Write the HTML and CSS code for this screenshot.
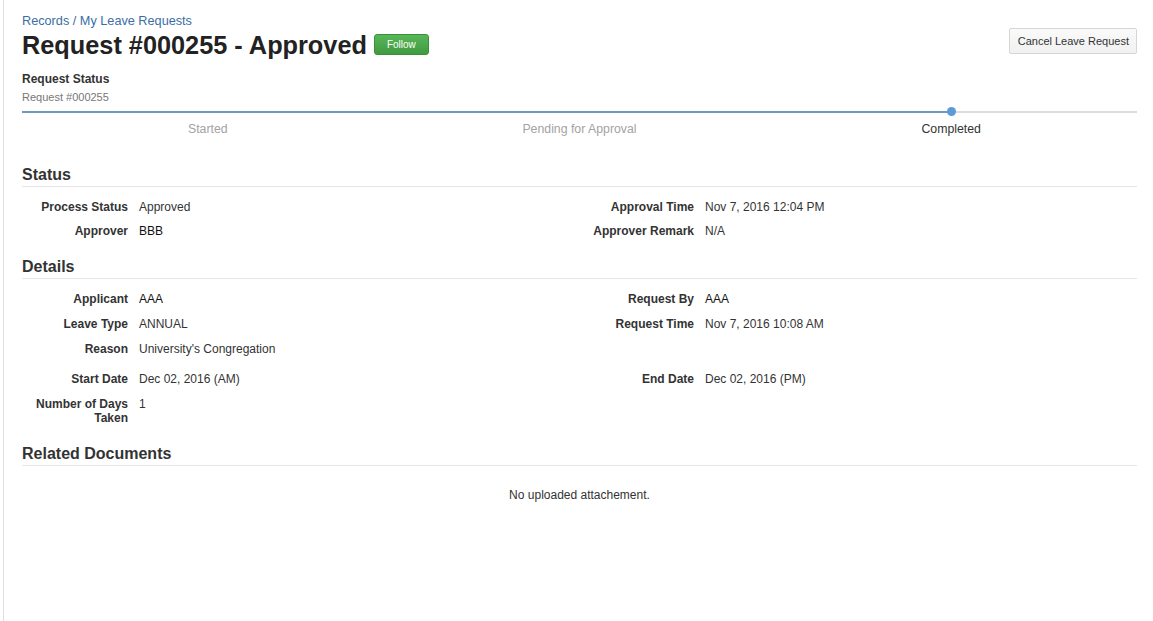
FILE: index.html
```html
<!DOCTYPE html>
<html lang="en">
<head>
    <meta charset="UTF-8">
    <meta name="viewport" content="width=device-width, initial-scale=1.0">
    <title>Request #000255 - Approved</title>
    <link rel="stylesheet" href="styles.css">
</head>
<body>
    <div class="page">
        <div class="page-header">
            <div class="title-block">
                <div class="breadcrumb">
                    <a href="#">Records</a> / <a href="#">My Leave Requests</a>
                </div>
                <div class="title-line">
                    <h1>Request #000255 - Approved</h1>
                    <button class="btn-follow">Follow</button>
                </div>
            </div>
            <button class="btn-cancel">Cancel Leave Request</button>
        </div>

        <div class="request-status">
            <h3>Request Status</h3>
            <div class="request-no">Request #000255</div>
            <div class="stepper">
                <div class="track">
                    <div class="track-fill" style="width: 83.333%"></div>
                    <span class="track-dot" style="left: 83.333%"></span>
                </div>
                <ol class="steps">
                    <li>Started</li>
                    <li>Pending for Approval</li>
                    <li class="current">Completed</li>
                </ol>
            </div>
        </div>

        <div class="section">
            <h2 class="section-title">Status</h2>
            <div class="fields tight">
                <div class="field-row">
                    <span class="label">Process Status</span>
                    <span class="value">Approved</span>
                    <span class="label">Approval Time</span>
                    <span class="value">Nov 7, 2016 12:04 PM</span>
                </div>
                <div class="field-row">
                    <span class="label">Approver</span>
                    <span class="value strong">BBB</span>
                    <span class="label">Approver Remark</span>
                    <span class="value">N/A</span>
                </div>
            </div>
        </div>

        <div class="section">
            <h2 class="section-title">Details</h2>
            <div class="fields">
                <div class="field-row">
                    <span class="label">Applicant</span>
                    <span class="value strong">AAA</span>
                    <span class="label">Request By</span>
                    <span class="value strong">AAA</span>
                </div>
                <div class="field-row">
                    <span class="label">Leave Type</span>
                    <span class="value">ANNUAL</span>
                    <span class="label">Request Time</span>
                    <span class="value">Nov 7, 2016 10:08 AM</span>
                </div>
                <div class="field-row spaced">
                    <span class="label">Reason</span>
                    <span class="value">University's Congregation</span>
                </div>
                <div class="field-row">
                    <span class="label">Start Date</span>
                    <span class="value">Dec 02, 2016 (AM)</span>
                    <span class="label">End Date</span>
                    <span class="value">Dec 02, 2016 (PM)</span>
                </div>
                <div class="field-row">
                    <span class="label">Number of Days Taken</span>
                    <span class="value">1</span>
                </div>
            </div>
        </div>

        <div class="section">
            <h2 class="section-title">Related Documents</h2>
            <p class="empty">No uploaded attachement.</p>
        </div>
    </div>
</body>
</html>
```

FILE: styles.css
```css
body {
    margin: 0;
    font-family: "Liberation Sans", Arial, sans-serif;
    font-size: 12px;
    color: #333;
    background: #fff;
}

.page {
    margin-left: 3px;
    border-left: 1px solid #dedede;
    padding: 12px 16px 0 18px;
    min-height: 100vh;
    box-sizing: border-box;
}

/* header */
.page-header {
    display: flex;
    justify-content: space-between;
    align-items: flex-start;
}

.breadcrumb {
    font-size: 12.7px;
    line-height: 18px;
    color: #3b6ea5;
}

.breadcrumb a {
    color: #3b6ea5;
    text-decoration: none;
}

.title-line {
    display: flex;
    align-items: center;
    gap: 7px;
    margin-top: -1px;
}

.title-line h1 {
    margin: 0;
    font-size: 25.3px;
    line-height: 32px;
    font-weight: bold;
    color: #222;
}

.btn-follow {
    height: 21px;
    padding: 0 12px;
    margin-top: -2px;
    font-family: inherit;
    font-size: 10px;
    color: #fff;
    background: linear-gradient(#57b757, #419a41);
    border: 1px solid #3b8e3b;
    border-radius: 3px;
    cursor: pointer;
}

.btn-cancel {
    margin-top: 16px;
    height: 26px;
    padding: 0 7px 0 8px;
    font-family: inherit;
    font-size: 11px;
    color: #333;
    background: linear-gradient(#fafafa, #f1f1f1);
    border: 1px solid #d6d6d6;
    border-radius: 2px;
    cursor: pointer;
}

/* request status + progress */
.request-status h3 {
    margin: 10px 0 0;
    font-size: 12px;
    line-height: 16px;
    font-weight: bold;
    color: #333;
}

.request-no {
    margin-top: 3px;
    font-size: 11px;
    line-height: 14px;
    color: #777;
}

.stepper {
    margin-top: 7px;
}

.track {
    position: relative;
    height: 2px;
    background: #dcdcdc;
}

.track-fill {
    height: 2px;
    background: #7099bf;
}

.track-dot {
    position: absolute;
    top: -4px;
    width: 9px;
    height: 9px;
    margin-left: -4px;
    border-radius: 50%;
    background: #5b9bd8;
}

.steps {
    display: grid;
    grid-template-columns: repeat(3, 1fr);
    margin: 8px 0 0;
    padding: 0;
    list-style: none;
    text-align: center;
    font-size: 12.3px;
    line-height: 16px;
    color: #a3a3a3;
}

.steps .current {
    color: #333;
}

/* sections */
.section-title {
    margin: 19px 0 0;
    padding-bottom: 1px;
    font-size: 16px;
    line-height: 20px;
    font-weight: bold;
    color: #333;
    border-bottom: 1px solid #e6e6e6;
}

.request-status + .section .section-title {
    margin-top: 28px;
}

.fields {
    padding-top: 13px;
}

.field-row {
    display: grid;
    grid-template-columns: 106px 432px 112px 1fr;
    column-gap: 11px;
    line-height: 14px;
    margin-bottom: 11px;
}

.fields.tight .field-row {
    margin-bottom: 10px;
}

.fields .field-row:last-child {
    margin-bottom: 0;
}

.field-row.spaced {
    margin-top: 1px;
    margin-bottom: 16px;
}

.label {
    font-weight: bold;
    text-align: right;
}

.value.strong {
    color: #111;
}

.empty {
    margin: 22px 0 0;
    line-height: 14px;
    text-align: center;
}
```
